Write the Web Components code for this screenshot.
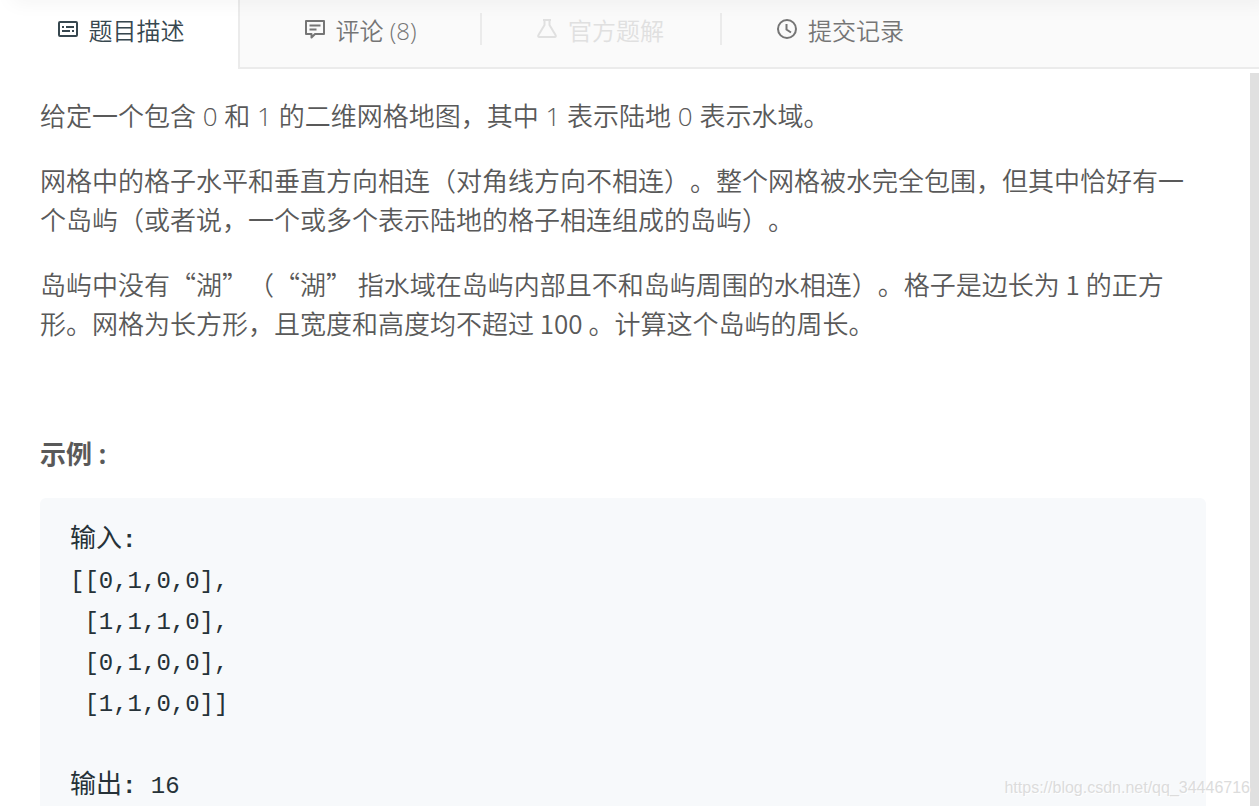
<!DOCTYPE html>
<html lang="zh-CN">
<head>
<meta charset="utf-8">
<title>岛屿的周长</title>
<style>
  body { margin: 0; background: #fff; }
</style>
</head>
<body>
<problem-page>
  <tab-bar slot="tabs">
    <tab-item icon="description" active>题目描述</tab-item>
    <tab-item icon="comment">评论 (8)</tab-item>
    <tab-item icon="flask" divided disabled>官方题解</tab-item>
    <tab-item icon="clock" divided>提交记录</tab-item>
  </tab-bar>
  <problem-text></problem-text>
  <page-watermark slot="mark">https://blog.csdn.net/qq_34446716</page-watermark>
</problem-page>

<script>
const define = (name, html, setup) => {
  const template = document.createElement('template');
  template.innerHTML = html;
  customElements.define(name, class extends HTMLElement {
    constructor() {
      super();
      this.attachShadow({ mode: 'open' }).append(template.content.cloneNode(true));
    }
    connectedCallback() { if (setup) setup(this, this.shadowRoot); }
  });
};

const ICONS = {
  description: '<rect x="2" y="4" width="18" height="14" rx="1"/><path d="M5 9h2M9 9h8M5 13h8M15 13h2"/>',
  comment: '<path d="M2 3h18v13h-9l-3.500 3.500V16H2z" stroke-linejoin="round"/><path d="M5.500 7.500h11M5.500 11.500h7"/>',
  flask: '<path d="M7 2h8M8.500 2v5L2.500 17q-1 2 1 2h15q2 0 1-2L13.500 7V2" stroke-linejoin="round"/>',
  clock: '<circle cx="11" cy="11" r="9"/><path d="M10.500 6v5.500l4.500 3"/>'
};

define('tab-item', `
  <style>
    :host { display: flex; box-sizing: border-box; flex: 0 0 240px; position: relative; background: #fafafa; border-bottom: 2px solid #ebebeb; color: #757575; }
    :host([active]) { background: #fff; border-bottom: 0; border-right: 2px solid #ebebeb; padding: 0 0 2px 3px; color: #37474f; }
    :host([disabled]) { color: #e0e0e0; }
    :host([divided])::before { content: ""; position: absolute; left: 0; top: 13px; width: 2px; height: 32px; background: #ebebeb; }
    button { flex: 1; display: flex; align-items: center; justify-content: center; gap: 10px; padding: 0 0 6px; border: 0; background: none; color: inherit; font: inherit; cursor: pointer; }
    svg { width: 22px; height: 22px; margin-bottom: 4px; fill: none; stroke: currentColor; stroke-width: 2; }
  </style>
  <button type="button"><svg viewBox="0 0 22 22" aria-hidden="true"></svg><span><slot></slot></span></button>`,
  (host, root) => {
    root.querySelector('svg').innerHTML = ICONS[host.getAttribute('icon')];
    root.querySelector('button').disabled = host.hasAttribute('disabled');
  });

define('tab-bar', `
  <style>
    :host { display: block; position: relative; overflow: hidden; }
    nav { display: flex; height: 69px; font-size: 24px; line-height: 36px; }
    .rest { flex: 1; background: #fafafa; border-bottom: 2px solid #ebebeb; }
    .shade { position: absolute; left: 12px; right: -10px; top: -10px; height: 10px; box-shadow: 0 0 20px rgba(0, 0, 0, .08); }
  </style>
  <nav><slot></slot><div class="rest"></div></nav><div class="shade"></div>`);

define('code-sample', `
  <style>
    :host { display: block; background: #f7f9fb; border-radius: 6px; padding: 22px 30px; color: #263238; }
    pre { margin: 0; font: 24px/41px "Liberation Mono", "Noto Sans CJK SC", monospace; }
    strong { font-size: 26px; font-weight: 400; line-height: 1; }
    b { font-size: 24px; }
  </style>
  <pre><strong>输入<b>:</b></strong>
[[0,1,0,0],
 [1,1,1,0],
 [0,1,0,0],
 [1,1,0,0]]

<strong>输出<b>:</b></strong> 16
</pre>`);

define('problem-text', `
  <style>
    :host { display: block; padding: 28px 44px 0 40px; font-size: 26px; line-height: 39px; color: #595959; text-spacing-trim: space-all; }
    p { margin: 0 0 26px; font-weight: 350; }
    .lead { margin-bottom: 24px; }
    .quoted { margin-bottom: 28px; font-family: "Noto Sans CJK SC", sans-serif; }
    strong { font-weight: 700; }
    .title { margin-bottom: 24px; }
  </style>
  <p>给定一个包含 0 和 1 的二维网格地图，其中 1 表示陆地 0 表示水域。</p>
  <p class="lead">网格中的格子水平和垂直方向相连（对角线方向不相连）。整个网格被水完全包围，但其中恰好有一个岛屿（或者说，一个或多个表示陆地的格子相连组成的岛屿）。</p>
  <p class="quoted">岛屿中没有“湖”（“湖” 指水域在岛屿内部且不和岛屿周围的水相连）。格子是边长为 1 的正方形。网格为长方形，且宽度和高度均不超过 100 。计算这个岛屿的周长。</p>
  <p>&nbsp;</p>
  <p class="title"><strong>示例 :</strong></p>
  <code-sample></code-sample>`);

define('page-watermark', `
  <style>
    :host { position: absolute; right: 9px; bottom: 8px; font: 16px/20px "Liberation Sans", sans-serif; color: #dcdcdc; text-shadow: 1px 1px 0 #fff; pointer-events: none; }
  </style>
  <slot></slot>`);

define('problem-page', `
  <style>
    :host { display: flex; flex-direction: column; height: 100vh; position: relative; overflow: hidden; font-family: "Open Sans", "Noto Sans CJK SC", sans-serif; font-weight: 350; }
    main { flex: 1; min-height: 0; display: flex; }
    .scroll { flex: 1; min-width: 0; overflow: hidden; }
    .bar { width: 9px; margin-top: 4px; background: #e0e0e0; }
  </style>
  <slot name="tabs"></slot>
  <main><div class="scroll"><slot></slot></div><div class="bar"></div></main>
  <slot name="mark"></slot>`);
</script>
</body>
</html>
